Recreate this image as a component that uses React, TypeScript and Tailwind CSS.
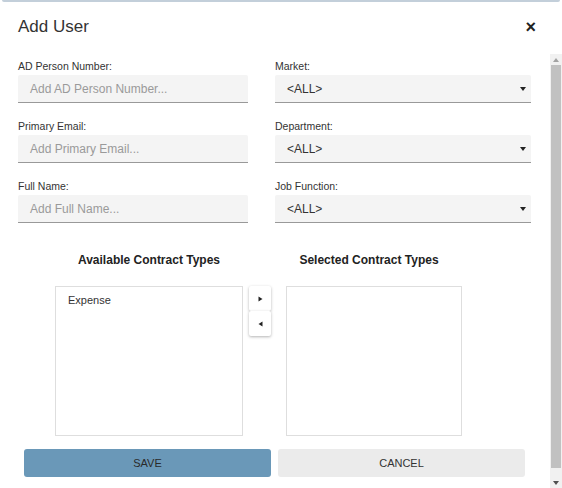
import React from "react";

function Field({ label, placeholder }: { label: string; placeholder: string }) {
  return (
    <div className="flex flex-col">
      <div className="h-[16px] text-[10.5px] leading-[14px] text-[#333]">{label}</div>
      <div className="h-[28px] bg-[#f4f4f4] border-b border-[#999] rounded-t-[2px] flex items-center pl-[12px] text-[12px] text-[#9a9a9a]">
        {placeholder}
      </div>
    </div>
  );
}

function SelectField({ label }: { label: string }) {
  return (
    <div className="flex flex-col">
      <div className="h-[16px] text-[10.5px] leading-[14px] text-[#333]">{label}</div>
      <div className="h-[28px] bg-[#f4f4f4] border-b border-[#999] rounded-t-[2px] flex items-center justify-between pl-[12px] pr-[4px] text-[12px] text-[#333]">
        <span>&lt;ALL&gt;</span>
        <svg width="8" height="6" viewBox="0 0 8 6"><path d="M1 1 L7 1 L4 5 Z" fill="#222" /></svg>
      </div>
    </div>
  );
}

export default function App() {
  return (
    <div className="relative w-[562px] h-[488px] bg-white overflow-hidden" style={{ fontFamily: '"Liberation Sans", Arial, sans-serif' }}>
      <div className="h-[2px] mx-[2px] bg-[#c3cfda] rounded-b-[2px]" />
      <div className="flex items-center justify-between h-[50px] pl-[18px] pr-[26px]">
        <div className="text-[17px] text-[#333] mt-[-1px]">Add User</div>
        <div className="text-[18px] font-bold text-[#222] leading-none">×</div>
      </div>

      <div className="flex gap-[27px] pl-[18px] mt-[7px]">
        <div className="w-[230px] flex flex-col gap-[16px]">
          <Field label="AD Person Number:" placeholder="Add AD Person Number..." />
          <Field label="Primary Email:" placeholder="Add Primary Email..." />
          <Field label="Full Name:" placeholder="Add Full Name..." />
        </div>
        <div className="w-[256px] flex flex-col gap-[16px]">
          <SelectField label="Market:" />
          <SelectField label="Department:" />
          <SelectField label="Job Function:" />
        </div>
      </div>

      <div className="flex mt-[27px] pl-[55px]">
        <div className="flex flex-col w-[188px]">
          <div className="text-[12px] font-bold text-[#222] text-center h-[36px] pt-[1px]">Available Contract Types</div>
          <div className="h-[150px] border border-[#dedede] px-[12px] pt-[5px] text-[11px] text-[#333]">Expense</div>
        </div>
        <div className="flex flex-col w-[22px] ml-[6px] mt-[36px]">
          <div className="h-[25px] bg-white rounded-[2px] shadow-[0_1px_3px_rgba(0,0,0,0.3)] flex items-center justify-center">
            <svg width="5" height="6" viewBox="0 0 5 6"><path d="M0.5 0.5 L4.5 3 L0.5 5.5 Z" fill="#222" /></svg>
          </div>
          <div className="h-[25px] bg-white rounded-[2px] shadow-[0_1px_3px_rgba(0,0,0,0.3)] flex items-center justify-center">
            <svg width="5" height="6" viewBox="0 0 5 6"><path d="M4.5 0.5 L0.5 3 L4.5 5.5 Z" fill="#222" /></svg>
          </div>
        </div>
        <div className="flex flex-col w-[176px] ml-[15px]">
          <div className="text-[12px] font-bold text-[#222] text-center h-[36px] pt-[1px] ml-[-10px]">Selected Contract Types</div>
          <div className="h-[150px] border border-[#dedede]" />
        </div>
      </div>

      <div className="flex gap-[7px] pl-[24px] mt-[13px]">
        <div className="w-[247px] h-[28px] bg-[#6a98b8] rounded-[3px] flex items-center justify-center text-[11px] text-[#2a2a2a]">SAVE</div>
        <div className="w-[247px] h-[28px] bg-[#ebebeb] rounded-[3px] flex items-center justify-center text-[11px] text-[#333]">CANCEL</div>
      </div>

      <div className="absolute right-0 top-[54px] bottom-0 w-[12px] bg-[#f1f1f1] flex flex-col items-center">
        <div className="h-[11px] flex items-center justify-center">
          <svg width="6" height="4" viewBox="0 0 6 4"><path d="M0 4 L6 4 L3 0 Z" fill="#a3a3a3" /></svg>
        </div>
        <div className="w-[10px] h-[403px] bg-[#c1c1c1]" />
        <div className="flex-1 flex items-end justify-center pb-[3px]">
          <svg width="6" height="4" viewBox="0 0 6 4"><path d="M0 0 L6 0 L3 4 Z" fill="#505050" /></svg>
        </div>
      </div>
    </div>
  );
}
